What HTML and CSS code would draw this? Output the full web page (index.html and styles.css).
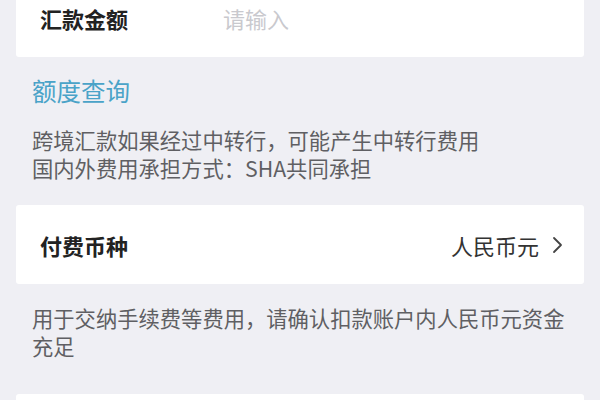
FILE: index.html
```html
<!DOCTYPE html>
<html lang="zh-CN">
<head>
<meta charset="utf-8">
<title>跨境汇款</title>
<link rel="stylesheet" href="styles.css">
</head>
<body>
<div class="page">
  <div class="card card-first">
    <span class="label label-fixed">汇款金额</span>
    <span class="placeholder">请输入</span>
  </div>

  <div class="section">
    <a class="link">额度查询</a>
    <p class="note note-first">跨境汇款如果经过中转行，可能产生中转行费用<br>国内外费用承担方式：SHA共同承担</p>
  </div>

  <div class="card card-row">
    <span class="label">付费币种</span>
    <span class="value">人民币元
      <svg class="chevron" width="11" height="18" viewBox="0 0 11 18" aria-hidden="true">
        <path d="M2 2 L9 9 L2 16" fill="none" stroke="#444" stroke-width="1.8" stroke-linecap="round" stroke-linejoin="round"/>
      </svg>
    </span>
  </div>

  <p class="note note-second">用于交纳手续费等费用，请确认扣款账户内人民币元资金充足</p>

  <div class="card card-last"></div>
</div>
</body>
</html>
```

FILE: styles.css
```css
html, body {
  margin: 0;
  padding: 0;
  background: #efeff4;
  font-family: "Noto Sans CJK SC", "Noto Sans", sans-serif;
  overflow: hidden;
}

.page {
  display: flex;
  flex-direction: column;
  height: 400px;
  overflow: hidden;
}

.card {
  background: #ffffff;
  margin: 0 16px;
  border-radius: 3px;
  display: flex;
  align-items: center;
  flex-shrink: 0;
}

.card-first {
  height: 79px;
  margin-top: -22px;
  padding: 0 21px 0 24px;
}

.card-row {
  height: 79px;
  margin-top: 23px;
  padding: 0 21px 0 24px;
  justify-content: space-between;
}

.card-last {
  height: 6px;
  margin-top: 34px;
  border-radius: 3px 3px 0 0;
}

.label {
  font-size: 22px;
  font-weight: 700;
  color: #222222;
  line-height: 30px;
}

.label-fixed {
  width: 183px;
}

.placeholder {
  font-size: 22px;
  color: #c9c9ce;
  line-height: 30px;
}

.value {
  display: flex;
  align-items: center;
  gap: 13px;
  font-size: 22px;
  color: #333333;
  line-height: 30px;
}

.chevron {
  display: block;
}

.section {
  padding: 17px 32px 0;
}

.link {
  display: block;
  font-size: 24.5px;
  line-height: 34px;
  color: #4aa3c8;
}

.note {
  margin: 0;
  font-size: 21.3px;
  line-height: 28px;
  color: #5f5f63;
}

.note-first {
  margin-top: 18px;
}

.note-second {
  margin: 20px 32px 0;
}
```
